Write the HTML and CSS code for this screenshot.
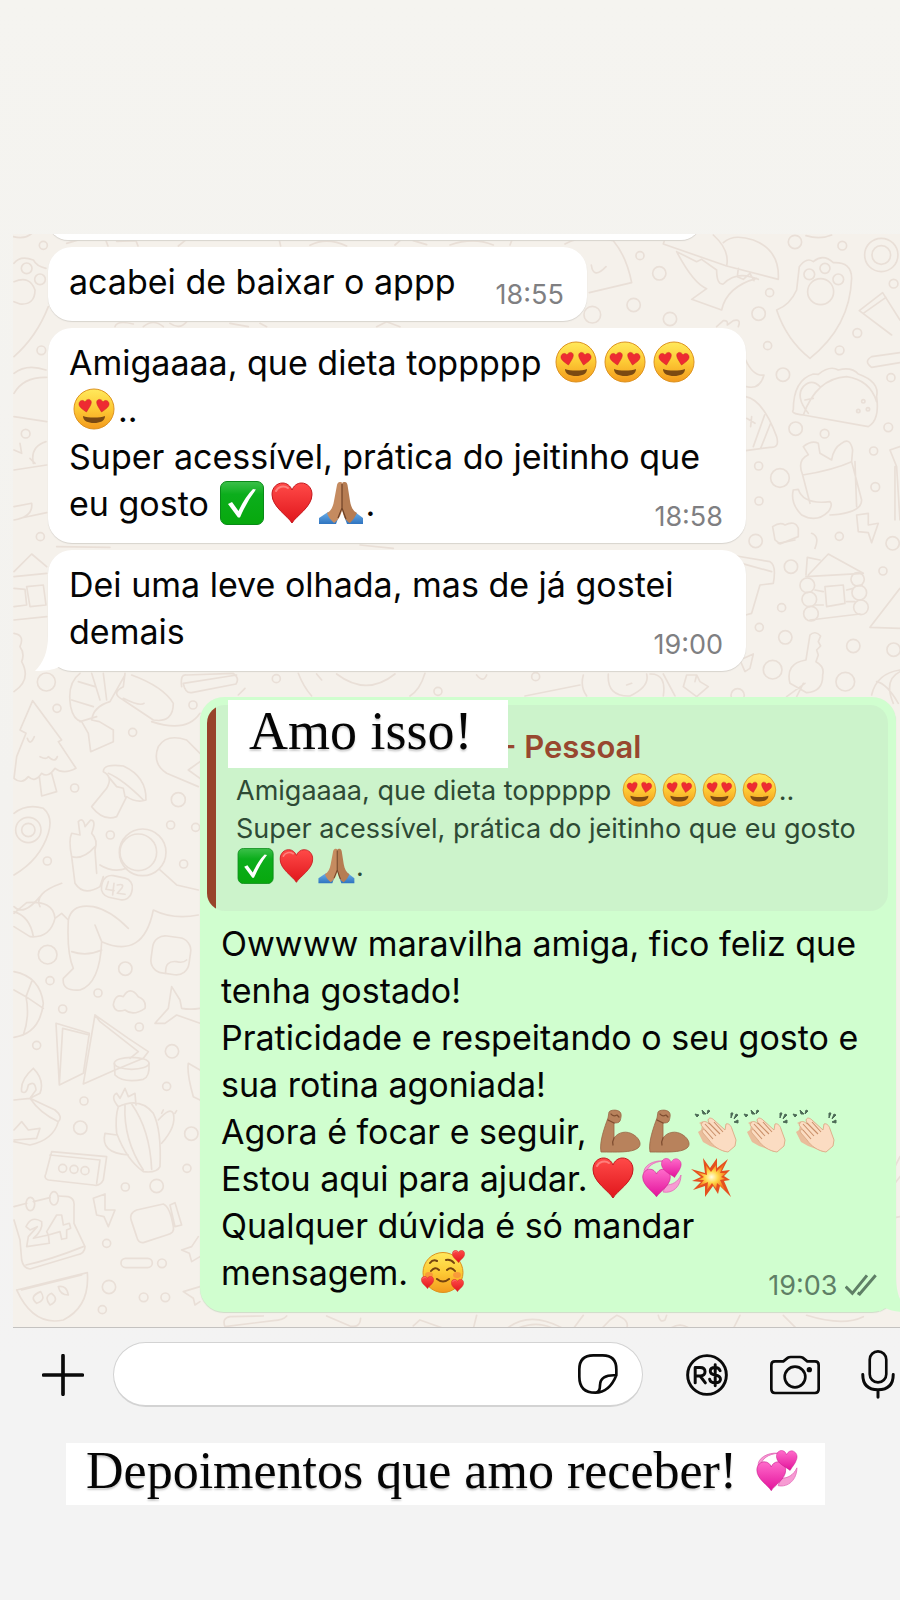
FILE: index.html
```html
<!DOCTYPE html>
<html lang="pt-BR">
<head>
<meta charset="utf-8">
<meta name="viewport" content="width=device-width, initial-scale=1">
<title>Depoimentos</title>
<link rel="stylesheet" href="styles.css">
</head>
<body>
<svg class="defs" aria-hidden="true">
  <defs>
    <linearGradient id="gFace" x1="0" y1="0" x2="0" y2="1"><stop offset="0" stop-color="#ffe95c"/><stop offset=".5" stop-color="#fdca35"/><stop offset="1" stop-color="#f39a1d"/></linearGradient>
    <linearGradient id="gRed" x1="0" y1="0" x2="0" y2="1"><stop offset="0" stop-color="#ff4a48"/><stop offset="1" stop-color="#e0161c"/></linearGradient>
    <linearGradient id="gPink" x1="0" y1="0" x2="0" y2="1"><stop offset="0" stop-color="#ff6ccb"/><stop offset="1" stop-color="#e3129b"/></linearGradient>
    <linearGradient id="gGreen" x1="0" y1="0" x2="0" y2="1"><stop offset="0" stop-color="#3cc04a"/><stop offset=".3" stop-color="#0cae1c"/><stop offset="1" stop-color="#07a80d"/></linearGradient>
    <linearGradient id="gBlue" x1="0" y1="0" x2="0" y2="1"><stop offset="0" stop-color="#6aaee8"/><stop offset="1" stop-color="#2f74c0"/></linearGradient>
    <radialGradient id="gBoom"><stop offset="0" stop-color="#fffde0"/><stop offset=".45" stop-color="#ffd94a"/><stop offset="1" stop-color="#f47a1c"/></radialGradient>
  </defs>
  <symbol id="heart" viewBox="0 0 42 42"><path d="M21 41C17 34 1 25 1 12.500C1 5.500 6 1 11.500 1C16 1 19.500 4 21 8C22.500 4 26 1 30.500 1C36 1 41 5.500 41 12.500C41 25 25 34 21 41Z" fill="url(#gRed)" stroke="#c4161c" stroke-width="1"/><path d="M5 9C7 4.500 13 3 17 6" fill="none" stroke="#ff9a94" stroke-width="2" stroke-linecap="round" opacity=".7"/></symbol>
  <symbol id="e-heart" viewBox="-2 0 49 44"><use href="#heart" x="2" y="1" width="42" height="42"/></symbol>
  <symbol id="e-eyes" viewBox="-2 0 49 44">
    <circle cx="23" cy="22" r="20" fill="url(#gFace)" stroke="#dd921f" stroke-width="1"/>
    <path d="M12 29C17 31 29 31 34 29C34 34 29 36 23 36S12 34 12 29Z" fill="#7b4a12"/>
    <path d="M15.500 25C11 22 7.500 19.500 8 16.500C8.500 13 12.500 12.500 14 15C15.500 11.500 20 11.500 20.300 15C20.500 18 17.500 21.500 15.500 25Z" fill="#ee2b32" stroke="#c92026" stroke-width=".5"/>
    <path d="M30.500 25C35 22 38.500 19.500 38 16.500C37.500 13 33.500 12.500 32 15C30.500 11.500 26 11.500 25.700 15C25.500 18 28.500 21.500 30.500 25Z" fill="#ee2b32" stroke="#c92026" stroke-width=".5"/>
  </symbol>
  <symbol id="e-check" viewBox="-2 0 49 44"><rect x=".5" y=".5" width="43" height="43" rx="6.500" fill="url(#gGreen)" stroke="#0a8a18"/><path d="M8 23L12 21L18.500 30Q25 16 33 8L36 8.500Q27 20 20 36.500H18Z" fill="#fff"/></symbol>
  <symbol id="e-pray" viewBox="-2 0 49 44">
    <path d="M1 37L10 31L21 35L18 43H1ZM45 37L37 31L26 35L29 43H45Z" fill="url(#gBlue)"/>
    <path d="M22.500 1C24 1 24.500 2 24.500 4V27C23 36 19 40 16 42C13 39 10 36 9 32C13 30 15 26 16 20L19 4C19.500 1.500 21 .5 22.500 1Z" fill="#c58b60"/>
    <path d="M26 1C28 .5 29 1.500 29.500 4L32 20C33 26 35 30 39 32C37 36 35 39 32 42C28 40 25 36 24 27V4C24 2 24.500 1 26 1Z" fill="#b67c52"/>
    <path d="M24 3V27L20 37M24 27L28 38" fill="none" stroke="#6f4227" stroke-width="1.200"/>
  </symbol>
  <symbol id="e-arm" viewBox="0 0 49 44">
    <path d="M5 43C3 33 9 17 12 9L13 3C14 1 21 0 24 3C26 5 25 9 24 12C23 14 20 14 18 14L18 29C22 23 31 21 38 26C44 30 46 36 42 39C36 44 20 43 5 43Z" fill="#b8825c" stroke="#996645" stroke-width=".8"/>
    <path d="M18 29Q16 33 17 36M15 5Q17 8 21 6L23 8M12 11L18 14" fill="none" stroke="#7e4d30" stroke-width="1.300" stroke-linecap="round"/>
  </symbol>
  <symbol id="e-clap" viewBox="0 0 49 44">
    <path d="M5 14L9 12L7 21L4 23L9 33L16 37L27 41L31 43L22 24Z" fill="#e9bd9b"/>
    <path d="M8 14C10 11 13 13 15 15L14 11C15 8 18 9 20 11L31 21L32 15C34 14 37 16 38 20L42 31L41 37L34 43C26 42 19 37 15 31L9 24C7 21 9 20 11 21L7 16Z" fill="#fbdcc2" stroke="#dba985" stroke-width=".9"/>
    <path d="M11 15L22 27M15 14L26 25M20 13L29 23M11 21L19 30" fill="none" stroke="#c98f69" stroke-width="1.100"/>
    <path d="M1 5L5 6L3 8ZM8 1L12 5L9 5ZM14 1L16 2L13 5ZM37 4L39 4L37 9ZM42 5L44 6L40 10ZM40 13L44 11L44 14Z" fill="#4c6a56" stroke="#4c6a56"/>
  </symbol>
  <symbol id="e-hearts" viewBox="-2 0 49 44">
    <path d="M5 17C4 10 14 4 24 5C14 6 9 10 7 17ZM24 36C34 38 42 30 42 19C39 26 33 29 27 29Z" fill="#f79bd3" stroke="#e56ab9" stroke-width=".8"/>
    <svg x="3" y="12" width="29" height="30" viewBox="0 0 42 42"><path d="M21 41C17 34 1 25 1 12.500C1 5.500 6 1 11.500 1C16 1 19.500 4 21 8C22.500 4 26 1 30.500 1C36 1 41 5.500 41 12.500C41 25 25 34 21 41Z" fill="url(#gPink)" stroke="#c41387" stroke-width=".8"/></svg>
    <svg x="22" y="1" width="21" height="21" viewBox="0 0 42 42"><path d="M27 41C21 35 3 29 1 16C0 7 6 2 12 3C17 4 19 7 20 11C23 5 28 2 33 4C40 7 42 14 39 21C37 28 31 34 27 41Z" fill="url(#gPink)" stroke="#c41387" stroke-width=".8"/></svg>
  </symbol>
  <symbol id="e-boom" viewBox="-2 0 49 44"><path d="M3 13L17 17L15 2L22 12L29 2L29 12L40 3L34 15L42 14L36 20L42 24L36 25L43 41L32 30L30 38L25 30L17 41L17 30L5 34L13 26L4 25L13 21Z" fill="#e5501f"/><path d="M9 16L19 19L18 9L23 16L28 9L28 16L36 8L32 17L38 17L33 21L37 23L32 24L37 34L29 27L28 33L24 27L19 34L20 26L11 30L16 24L10 24L16 21Z" fill="url(#gBoom)"/></symbol>
  <symbol id="e-love" viewBox="-2 0 49 44">
    <circle cx="23" cy="22.500" r="20" fill="url(#gFace)" stroke="#dd921f" stroke-width="1"/>
    <path d="M10 13Q13 9 17 11M26 10Q31 9 34 13M11 21Q15 16 19 20M27 20Q31 16 35 21M17 29Q23 34 29 29" fill="none" stroke="#75430f" stroke-width="2" stroke-linecap="round"/>
    <ellipse cx="9" cy="25" rx="4" ry="3" fill="#f8893c" opacity=".7"/><ellipse cx="37" cy="25" rx="4" ry="3" fill="#f8893c" opacity=".7"/>
    <use href="#heart" x="1" y="26" width="13" height="13"/><use href="#heart" x="32" y="0" width="13" height="13"/><use href="#heart" x="31" y="29" width="13" height="13"/>
  </symbol>
</svg>

<main class="story">
  <section class="chat" aria-label="Conversa">
    <svg class="doodles" viewBox="13 234 887 1095" preserveAspectRatio="xMinYMin slice" aria-hidden="true">
      <g transform="translate(0 220) scale(.3333)">
        <path d="M40 50Q75 60 98 38M200 70L250 55M318 62L324 78M350 64L408 62L414 78M535 78L555 62M838 60L842 78M930 76Q980 50 1040 78M1185 75L1200 62M1240 62L1280 74"/>
        <circle cx="130" cy="76" r="12"/><circle cx="80" cy="145" r="16"/><circle cx="120" cy="178" r="16"/>
        <path d="M42 130Q60 105 100 120Q110 140 138 145M42 185Q90 165 105 210Q105 255 60 252L42 245M145 260Q110 350 42 410M42 460Q80 430 138 450M42 520Q70 470 140 472M42 590L140 605M42 750L140 735M42 690L65 700L60 670M90 715L105 730M138 665Q90 680 100 730M42 860L95 850Q100 890 42 900M60 895L140 878M345 320Q350 300 400 312M430 320Q460 295 490 320M510 310Q540 330 560 305M690 310L745 320M780 310L800 320M1130 320L1160 305L1200 320"/>
        <circle cx="124" cy="391" r="13"/><circle cx="77" cy="641" r="13"/><circle cx="121" cy="950" r="12"/>
      </g>
      <g transform="translate(450 220) scale(.3333)">
        <path d="M0 75Q70 50 130 75M180 75L185 62M345 72Q400 40 490 62Q530 110 545 188L418 218M424 135Q430 180 468 140M640 72L830 138Q840 90 790 45M640 72Q645 50 660 45M830 138L985 178Q990 90 910 60Q850 40 820 68M680 95Q730 190 770 206L725 238L815 270Q830 200 920 175M680 95L740 125L755 118L800 150Q800 195 820 192Q860 150 925 178M865 145L862 170L880 178L900 160L912 182"/>
        <circle cx="570" cy="107" r="12"/><circle cx="628" cy="160" r="20"/><circle cx="551" cy="255" r="20"/><circle cx="660" cy="297" r="20"/><circle cx="427" cy="284" r="25"/><circle cx="959" cy="218" r="12"/><circle cx="926" cy="281" r="20"/><circle cx="953" cy="377" r="12"/><circle cx="1035" cy="66" r="20"/><circle cx="1177" cy="77" r="13"/><circle cx="1294" cy="105" r="50"/><circle cx="1294" cy="105" r="28"/><circle cx="1222" cy="339" r="13"/><circle cx="1331" cy="191" r="13"/><circle cx="1169" cy="391" r="13"/>
        <path d="M1040 210L1048 140Q1070 110 1090 125Q1120 100 1150 128Q1205 125 1205 175Q1200 320 1080 415Q1010 360 980 270Q1020 255 1040 210"/>
        <circle cx="1112" cy="215" r="39"/><circle cx="1078" cy="163" r="16"/><circle cx="1125" cy="145" r="15"/><circle cx="1165" cy="178" r="16"/>
        <path d="M1228 272L1298 218L1350 300M1228 272L1325 345M1240 280L1308 232M1350 398L1265 410Q1240 425 1265 442L1350 428M1068 47Q1110 60 1145 45M800 320L820 302Q835 300 832 315L850 302Q875 295 865 320"/>
        <path d="M1030 570Q1030 480 1090 462L1105 463Q1140 435 1165 450Q1205 440 1225 462Q1290 485 1280 530Q1290 600 1255 620L1060 585Q1020 580 1030 570M1060 585Q1100 475 1190 470Q1260 480 1280 545M1075 580Q1035 530 1060 500Q1085 475 1110 500M1065 540L1090 535"/>
        <circle cx="1240" cy="544" r="5"/><circle cx="1225" cy="573" r="5"/><circle cx="1254" cy="568" r="5"/><circle cx="999" cy="464" r="20"/><circle cx="1323" cy="473" r="12"/><circle cx="1037" cy="626" r="20"/><circle cx="1124" cy="641" r="13"/><circle cx="1315" cy="622" r="13"/><circle cx="926" cy="738" r="12"/><circle cx="1271" cy="693" r="12"/><circle cx="990" cy="774" r="28"/><circle cx="1276" cy="801" r="13"/><circle cx="927" cy="843" r="12"/><circle cx="1168" cy="949" r="12"/><circle cx="917" cy="963" r="20"/><circle cx="1328" cy="970" r="20"/>
        <path d="M887 420Q910 470 942 465Q930 510 890 500M887 530Q940 540 980 650Q990 685 960 682L887 692M944 585L910 680M962 610L932 685M890 595L915 610M905 590L902 620M1058 765Q1040 720 1075 704L1060 680Q1085 660 1105 670L1110 700L1145 720M1145 720Q1150 685 1175 670Q1200 650 1208 690L1205 725Q1150 750 1058 765L1080 850M1205 725L1235 840Q1235 880 1140 885M1215 725L1220 860M1030 810L1045 808Q1060 855 1140 845Q1150 855 1135 875Q1100 910 1055 885Q1020 850 1030 810M975 960L968 920Q990 905 1005 915Q1035 900 1045 925L1045 950Q1020 960 990 972ZM1220 885L1255 880L1255 915L1285 910L1265 968L1255 938L1225 935ZM1085 940Q1110 950 1095 985M1350 680L1320 690L1340 740L1350 900M1335 740L1335 900"/>
      </g>
      <g transform="translate(0 540) scale(.3333)">
        <path d="M42 95L95 42L140 80M42 110L140 100M42 145L75 148L80 195L42 200M80 140L130 135L138 195L90 200ZM42 240L140 230M42 280Q75 285 60 320Q75 340 65 365Q95 420 42 455M170 20L330 22M1080 15L1180 25"/>
        <circle cx="139" cy="426" r="27"/><circle cx="171" cy="505" r="12"/><circle cx="398" cy="577" r="12"/><circle cx="579" cy="495" r="12"/><circle cx="224" cy="744" r="12"/><circle cx="535" cy="779" r="21"/><circle cx="512" cy="855" r="12"/><circle cx="331" cy="885" r="12"/><circle cx="142" cy="963" r="12"/><circle cx="551" cy="972" r="12"/><circle cx="829" cy="416" r="12"/><circle cx="587" cy="862" r="12"/><circle cx="1314" cy="454" r="12"/>
        <path d="M98 482L60 570L78 580L50 650L42 715Q65 735 85 710Q105 730 125 700Q145 715 165 685Q190 705 228 685L175 605L185 600ZM118 710L125 768L170 755L155 700M82 595Q90 620 103 590M120 650Q140 660 145 650Q165 670 172 650"/>
        <path d="M240 400Q200 430 212 500Q220 540 245 545L265 580L272 635L340 605L340 570L298 545L275 540Q280 500 330 485L375 405M235 425L285 440M215 480L280 500M240 545L290 530M275 400L300 480M310 400L320 480M375 400L370 440Q330 460 370 480L460 540Q520 550 520 490Q490 440 395 405M370 475Q420 500 432 490M455 545Q560 580 600 520M545 440Q540 400 560 405L700 400Q720 415 708 432L575 458Q555 460 550 430L710 405M595 740L500 700Q455 670 475 620Q500 580 560 600L600 640M600 665L565 690L600 715"/>
        <path d="M310 695Q310 670 370 678Q440 710 438 780Q410 790 380 770L350 830Q310 845 275 800L320 745Q340 710 310 695M325 700Q370 720 430 780M325 710L350 740L370 745L375 770"/>
        <path d="M42 820Q80 790 130 805Q160 830 145 880Q120 960 42 1005"/><circle cx="85" cy="870" r="38"/><circle cx="85" cy="870" r="20"/>
        <path d="M215 950Q205 900 215 880L240 885L235 845Q250 830 255 860L272 840Q290 840 275 880Q295 900 285 930L290 1000M215 950Q250 960 285 920M215 950L225 1030Q250 1070 300 1040L310 1010M300 975Q340 1000 380 985"/>
        <circle cx="428" cy="937" r="70"/><circle cx="415" cy="937" r="55"/><rect x="305" y="1010" width="92" height="66" rx="28" transform="rotate(12 350 1042)"/>
        <path d="M325 1025L318 1048L342 1052M342 1030L338 1065M352 1035Q375 1030 365 1045L352 1060L375 1063M480 990L530 1035L595 1050M185 1030Q100 1060 120 1100M120 1070Q70 1130 42 1100M895 400Q910 440 935 468M1275 400Q1260 450 1230 468M1010 402Q1100 470 1185 402M950 402L965 420M735 445L715 465"/>
      </g>
      <g transform="translate(450 540) scale(.3333)">
        <path d="M860 48L960 65Q980 75 970 130L930 135L905 220L887 225M875 70L965 95M1068 105L1072 52L1110 60M1075 105L1135 42L1240 100L1068 110M1125 140L1180 135L1185 190L1130 200ZM1095 150L1120 155M1190 150L1210 145M1095 195L1120 195M1190 185L1215 185M1080 240L1230 222M1350 145L1260 262L1350 265"/>
        <circle cx="1223" cy="118" r="20"/><circle cx="1072" cy="136" r="22"/><circle cx="1078" cy="178" r="22"/><circle cx="1083" cy="221" r="22"/><circle cx="1228" cy="158" r="22"/><circle cx="1233" cy="202" r="22"/><circle cx="1023" cy="80" r="20"/><circle cx="1299" cy="93" r="12"/><circle cx="995" cy="203" r="12"/><circle cx="928" cy="262" r="12"/><circle cx="1006" cy="292" r="20"/><circle cx="1210" cy="318" r="20"/><circle cx="1331" cy="329" r="20"/><circle cx="968" cy="389" r="28"/><circle cx="1186" cy="425" r="28"/><circle cx="257" cy="410" r="12"/><circle cx="863" cy="466" r="20"/>
        <path d="M1068 360L1080 285Q1095 270 1112 288L1105 305L1112 318L1100 330L1105 345L1098 365Q1125 380 1118 405Q1120 455 1070 458L1020 430Q1005 370 1068 360M1065 430L1010 470M1060 430L1040 470M985 10L1035 0M885 395L870 360L910 342L900 385ZM700 440L710 405L740 405L750 425L775 440L740 470ZM740 405L735 425M600 402Q650 400 640 468M640 402L675 468M475 402Q470 470 540 468Q600 440 590 402M530 435L545 430M400 405Q390 440 410 468M225 468L390 435M80 405Q100 430 110 405M1350 390Q1280 400 1265 465M1350 395Q1300 420 1330 490M1280 425Q1310 430 1345 490"/>
      </g>
      <g transform="translate(0 900) scale(.3333)">
        <path d="M42 40L80 8Q160 0 165 55Q150 115 90 110L42 80M42 35Q90 50 100 110M165 55L185 40L205 60M205 60Q215 10 280 20Q330 30 385 85M285 75L305 125Q430 180 460 30Q520 60 595 45M205 60Q200 160 220 205L190 235Q185 275 240 270Q300 250 305 125M215 155Q260 170 305 150"/>
        <rect x="455" y="110" width="115" height="112" rx="38" transform="rotate(8 512 166)"/><path d="M497 220Q495 180 530 185Q550 190 560 180M340 315Q345 280 370 290Q390 255 415 290Q440 300 435 325Q400 350 375 330Q345 340 340 315M515 260L540 300L545 325Q570 330 600 325M515 260L505 325L465 370L495 370L530 345L600 370"/>
        <circle cx="143" cy="164" r="28"/><circle cx="150" cy="242" r="12"/><circle cx="188" cy="327" r="12"/><circle cx="294" cy="279" r="12"/><circle cx="376" cy="206" r="20"/><circle cx="418" cy="381" r="12"/><circle cx="110" cy="436" r="12"/><circle cx="516" cy="454" r="20"/><circle cx="500" cy="559" r="12"/><circle cx="252" cy="603" r="12"/><circle cx="241" cy="683" r="20"/><circle cx="574" cy="701" r="20"/><circle cx="561" cy="805" r="12"/><circle cx="376" cy="861" r="12"/><circle cx="470" cy="858" r="20"/><circle cx="320" cy="1030" r="12"/><circle cx="486" cy="1090" r="13"/><circle cx="327" cy="1161" r="20"/><circle cx="431" cy="1192" r="13"/><circle cx="496" cy="1192" r="13"/><circle cx="307" cy="1229" r="12"/>
        <path d="M42 215Q120 230 130 310Q120 400 42 412M42 270L78 290L95 245M78 290L130 325M78 290Q90 350 70 405M168 370L268 400L250 520L178 555ZM178 555L188 385L268 405M285 345L250 552L345 510L430 475L445 455L385 415ZM285 345L300 365L415 455L390 475"/><ellipse cx="395" cy="490" rx="52" ry="18"/><path d="M343 490L345 525Q370 550 430 538Q450 530 447 490"/>
        <path d="M100 505Q60 540 65 575Q80 585 85 555Q105 540 108 570L90 595M100 505Q135 540 120 580L90 595L42 600M90 595L165 630Q190 650 175 665Q120 640 90 595M175 665Q160 720 90 735L42 725M42 690L65 665L85 690L120 685L110 715L42 720"/>
        <path d="M355 620Q330 590 350 580L360 595L375 565L385 590L405 580L408 615M355 620Q345 650 350 700Q380 780 430 815Q470 820 480 800Q485 690 460 640Q420 590 355 620M375 615Q370 720 430 810M395 612Q450 690 455 808M475 660Q510 620 520 640Q530 680 485 730M350 705L315 700Q300 760 385 765M485 640L490 630M525 640L530 632"/>
        <path d="M155 755L320 770L310 840Q300 860 280 855L145 840Q130 835 138 820ZM150 765L300 780L290 850"/><circle cx="188" cy="805" r="12"/><circle cx="222" cy="808" r="12"/><circle cx="255" cy="812" r="12"/>
        <path d="M42 920L80 910M100 905L150 893M175 888L205 890Q225 895 222 920L222 970L255 1040Q255 1060 230 1065L90 1107Q70 1105 65 1080L60 1020L42 960M78 1095Q150 1080 250 1040"/><ellipse cx="91" cy="912" rx="13" ry="20"/><ellipse cx="162" cy="895" rx="13" ry="20"/>
        <path d="M78 980Q95 945 125 965Q130 990 100 1015L145 1005L148 1030L80 1040L85 1010L112 980L90 990ZM170 945L140 995L145 1005L180 995L185 1018L200 1015L200 990L212 985L208 970L190 975L185 945ZM280 895L315 882L315 930L345 930L325 980L312 950L290 945ZM395 965Q385 940 410 930L490 912Q510 920 520 980Q525 1000 500 1005L430 1028Q415 1030 410 1010ZM510 915L525 908L545 975L525 980Z"/>
        <rect x="363" y="1075" width="94" height="28" rx="14"/><path d="M545 1050L575 1040L595 1010M545 1050L568 1060L575 1085L600 1070M550 1175L600 1160M550 1175L580 1195L585 1215L600 1205M50 1170L262 1118Q270 1220 190 1260Q100 1280 50 1170M65 1170L245 1125M110 1210Q85 1190 122 1175Q140 1200 110 1210M150 1215Q130 1190 155 1180Q180 1200 150 1215M205 1185Q180 1185 175 1160Q200 1155 205 1185M565 490Q560 520 580 590L600 600M565 490L600 510M675 1280Q665 1255 690 1250L790 1248M675 1280L820 1262Q850 1260 860 1248M980 1248L1050 1278Q1080 1285 1082 1255M1240 1278L1260 1260L1330 1285"/>
      </g>
      <g transform="translate(450 1090) scale(.3333)">
        <path d="M80 676L70 716M170 716Q240 660 340 716M200 716Q260 690 310 716M400 676L370 716M455 716L480 690L500 676Q540 690 530 716M625 676Q630 700 645 690L650 676M660 716Q690 695 720 716M870 676L850 716M1000 676L1040 716M1070 676Q1180 710 1240 680M1350 200L1335 230M1350 260L1335 280M1350 380L1338 382"/>
      </g>
    </svg>

    <div class="bubble in cut"></div>
    <article class="bubble in short">
      <p>acabei de baixar o appp</p>
      <time>18:55</time>
    </article>
    <article class="bubble in wide">
      <p>Amigaaaa, que dieta toppppp <svg class="emoji" role="img" aria-label="😍"><use href="#e-eyes"/></svg><svg class="emoji" role="img" aria-label="😍"><use href="#e-eyes"/></svg><svg class="emoji" role="img" aria-label="😍"><use href="#e-eyes"/></svg><br><svg class="emoji" role="img" aria-label="😍"><use href="#e-eyes"/></svg>..<br>Super acessível, prática do jeitinho que<br>eu gosto <svg class="emoji" role="img" aria-label="✅"><use href="#e-check"/></svg><svg class="emoji" role="img" aria-label="❤️"><use href="#e-heart"/></svg><svg class="emoji" role="img" aria-label="🙏🏽"><use href="#e-pray"/></svg>.</p>
      <time>18:58</time>
    </article>
    <article class="bubble in wide">
      <svg class="tail" viewBox="0 0 30 36" aria-hidden="true"><path d="M13 0C13 18 8 28 0 36C10 36 18 35 24 32L36 36V0Z" fill="#fff"/></svg>
      <p>Dei uma leve olhada, mas de já gostei<br>demais</p>
      <time>19:00</time>
    </article>

    <article class="bubble out">
      <svg class="tail" viewBox="0 0 30 36" aria-hidden="true"><path d="M17 0C17 18 22 28 30 36C20 36 12 35 6 32L0 36V0Z" fill="#d0fecf"/></svg>
      <blockquote class="quote">
        <h2>- Pessoal</h2>
        <p>Amigaaaa, que dieta toppppp <svg class="emoji" role="img" aria-label="😍"><use href="#e-eyes"/></svg><svg class="emoji" role="img" aria-label="😍"><use href="#e-eyes"/></svg><svg class="emoji" role="img" aria-label="😍"><use href="#e-eyes"/></svg><svg class="emoji" role="img" aria-label="😍"><use href="#e-eyes"/></svg>..<br>Super acessível, prática do jeitinho que eu gosto<br><svg class="emoji" role="img" aria-label="✅"><use href="#e-check"/></svg><svg class="emoji" role="img" aria-label="❤️"><use href="#e-heart"/></svg><svg class="emoji" role="img" aria-label="🙏🏽"><use href="#e-pray"/></svg>.</p>
      </blockquote>
      <strong class="sticker">Amo isso!</strong>
      <div class="reply">
        <p>Owwww maravilha amiga, fico feliz que<br>tenha gostado!<br>Praticidade e respeitando o seu gosto e<br>sua rotina agoniada!<br>Agora é focar e seguir, <svg class="emoji" role="img" aria-label="💪🏽"><use href="#e-arm"/></svg><svg class="emoji" role="img" aria-label="💪🏽"><use href="#e-arm"/></svg><svg class="emoji" role="img" aria-label="👏🏻"><use href="#e-clap"/></svg><svg class="emoji" role="img" aria-label="👏🏻"><use href="#e-clap"/></svg><svg class="emoji" role="img" aria-label="👏🏻"><use href="#e-clap"/></svg><br>Estou aqui para ajudar.<svg class="emoji" role="img" aria-label="❤️"><use href="#e-heart"/></svg><svg class="emoji" role="img" aria-label="💞"><use href="#e-hearts"/></svg><svg class="emoji" role="img" aria-label="💥"><use href="#e-boom"/></svg><br>Qualquer dúvida é só mandar<br>mensagem. <svg class="emoji" role="img" aria-label="🥰"><use href="#e-love"/></svg></p>
        <time>19:03 <svg class="ticks" viewBox="0 0 96 66" role="img" aria-label="Entregue"><path d="M2 38L22 58L66 4M38 56L44 60L92 4" fill="none" stroke="currentColor" stroke-width="9"/></svg></time>
      </div>
    </article>
  </section>

  <form class="composer">
    <button class="icon plus" type="button" aria-label="Anexar"><svg viewBox="0 0 126 126"><path d="M63 5V121M5 63H121" stroke-width="11"/></svg></button>
    <div class="field">
      <input type="text" aria-label="Mensagem">
      <button class="icon note" type="button" aria-label="Figurinhas"><svg viewBox="386 142 120 120"><path d="M432 146H460Q501 146 501 188V206Q480 258 438 258Q390 258 390 210V188Q390 146 432 146ZM501 206Q452 203 452 236Q452 255 440 258" stroke-width="8"/></svg></button>
    </div>
    <button class="icon pay" type="button" aria-label="Pagamento"><svg viewBox="707 137 128 128"><circle cx="771" cy="201" r="59" stroke-width="9"/><path d="M735 225V178H750Q765 178 765 191Q765 203 750 204H735M750 204L766 225M811 188Q807 178 796 178Q781 178 781 189Q781 199 796 201Q812 204 812 214Q812 225 796 225Q781 225 779 214M796 170V234" stroke-width="9"/></svg></button>
    <button class="icon camera" type="button" aria-label="Câmera"><svg viewBox="960 141 150 120"><path d="M975 160H1000L1014 149Q1017 147 1022 147H1050Q1055 147 1058 149L1072 160H1095Q1106 160 1106 171V244Q1106 255 1095 255H975Q964 255 964 244V171Q964 160 975 160Z" stroke-width="8"/><circle cx="1035" cy="207" r="31" stroke-width="8"/><circle cx="1078" cy="185" r="8" fill="currentColor" stroke="none"/></svg></button>
    <button class="icon mic" type="button" aria-label="Gravar áudio"><svg viewBox="1233 124 102 148"><rect x="1259" y="128" width="50" height="94" rx="25" stroke-width="8"/><path d="M1238 198Q1238 244 1284 244Q1330 244 1330 198M1284 244V267" stroke-width="9"/></svg></button>
  </form>

  <p class="caption">Depoimentos que amo receber! <svg class="emoji" role="img" aria-label="💞"><use href="#e-hearts"/></svg></p>
</main>
</body>
</html>
```
FILE: styles.css
```css
* { box-sizing: border-box; }
body {
  margin: 0;
  background: linear-gradient(#f5f4f0, #f3f2ef 50%, #f3f3f3 85%);
  color: #050505;
  font-family: Inter, "Liberation Sans", sans-serif;
}
p, h2, blockquote { margin: 0; }
.defs { position: absolute; width: 0; height: 0; }

.story { padding: 234px 0 93px; min-height: 100vh; overflow: hidden; }

.chat {
  position: relative;
  display: flex;
  flex-direction: column;
  align-items: flex-start;
  gap: 7px;
  margin-left: 13px;
  padding: 0 4px 15px 35px;
  overflow: hidden;
  background: #f5f1eb;
  border-bottom: 1px solid #c4c2c0;
}
.doodles {
  position: absolute;
  inset: 0;
  width: 100%;
  height: 100%;
  fill: none;
  stroke: #e9dfd7;
  stroke-width: 5;
  stroke-linecap: round;
  stroke-linejoin: round;
}

.bubble {
  position: relative;
  border-radius: 24px;
  font-size: 34px;
  line-height: 47px;
}
.in {
  padding: 11px 23px 16px 21px;
  background: #fff;
  box-shadow: 0 1px 1px #d8d4ce;
}
.cut { width: 77%; height: 40px; margin-top: -34px; }
.short { display: flex; align-items: flex-end; gap: 40px; }
.wide, .reply { display: grid; }
.wide { width: 698px; max-width: 100%; }
.wide > p, .wide > time, .reply > p, .reply > time { grid-area: 1 / 1; }
.wide > time, .reply > time { place-self: end; }
time {
  margin-bottom: -6px;
  color: #7f7f82;
  font-size: 27px;
  line-height: 32px;
  white-space: nowrap;
}
p { white-space: nowrap; }
.emoji { width: 49px; height: 44px; vertical-align: -9px; }
.tail { position: absolute; bottom: 0; left: -13px; width: 30px; height: 36px; }

.out {
  align-self: stretch;
  margin: 19px 0 0 152px;
  padding: 8px 8px 16px 7px;
  background: #d0fecf;
  box-shadow: 0 1px 1px #cfdcc8;
}
.out > .tail { left: auto; right: -13px; }
.out time { color: #5f7f66; }
.quote {
  padding: 18px 0 25px 29px;
  border-radius: 18px;
  background: linear-gradient(to right, #98432a 9px, #ccf3cb 9px);
  color: #2e4a35;
  font-size: 27px;
  line-height: 38px;
}
.quote h2 {
  margin-bottom: 2px;
  padding-left: 266px;
  color: #98472f;
  font-size: 31px;
  font-weight: 600;
  line-height: 47px;
}
.quote .emoji { width: 40px; height: 36px; vertical-align: -8px; }
.sticker {
  position: absolute;
  top: 3px;
  left: 28px;
  width: 280px;
  padding: 0 21px 6px;
  background: #fff;
  color: #050505;
  font: 54px/62px "Liberation Serif", serif;
  text-shadow: 0 2px 2px #ccc;
}
.reply { padding: 9px 11px 0 14px; }
.ticks { width: 32px; height: 22px; vertical-align: -1px; }

.composer {
  display: flex;
  align-items: center;
  padding: 14px 5px 0 42px;
}
.icon {
  flex: none;
  padding: 0;
  border: 0;
  background: none;
  color: #0a0a0a;
}
.icon svg {
  display: block;
  width: 100%;
  height: 100%;
  fill: none;
  stroke: currentColor;
  stroke-linecap: round;
  stroke-linejoin: round;
}
.plus { width: 42px; height: 42px; }
.field {
  display: flex;
  flex: 1;
  align-items: center;
  min-width: 0;
  height: 65px;
  margin-left: 29px;
  padding: 0 24px 0 30px;
  border: 1px solid #d3d3d3;
  border-bottom-width: 2px;
  border-radius: 33px;
  background: #fff;
}
.field input {
  flex: 1;
  min-width: 0;
  height: 48px;
  border: 0;
  outline: 0;
  background: none;
  font: inherit;
  font-size: 34px;
}
.note { width: 40px; height: 40px; }
.pay { width: 42px; height: 42px; margin-left: 43px; }
.camera { width: 50px; height: 40px; margin-left: 42px; }
.mic { width: 34px; height: 49px; margin-left: 41px; }

.caption {
  width: fit-content;
  margin: 36px 0 0 66px;
  padding: 0 22px 6px 20px;
  background: #fff;
  font: 52px/56px "Liberation Serif", serif;
  text-shadow: 0 2px 2px #ccc;
}
.caption .emoji { width: 53px; height: 46px; vertical-align: -6px; }
```
